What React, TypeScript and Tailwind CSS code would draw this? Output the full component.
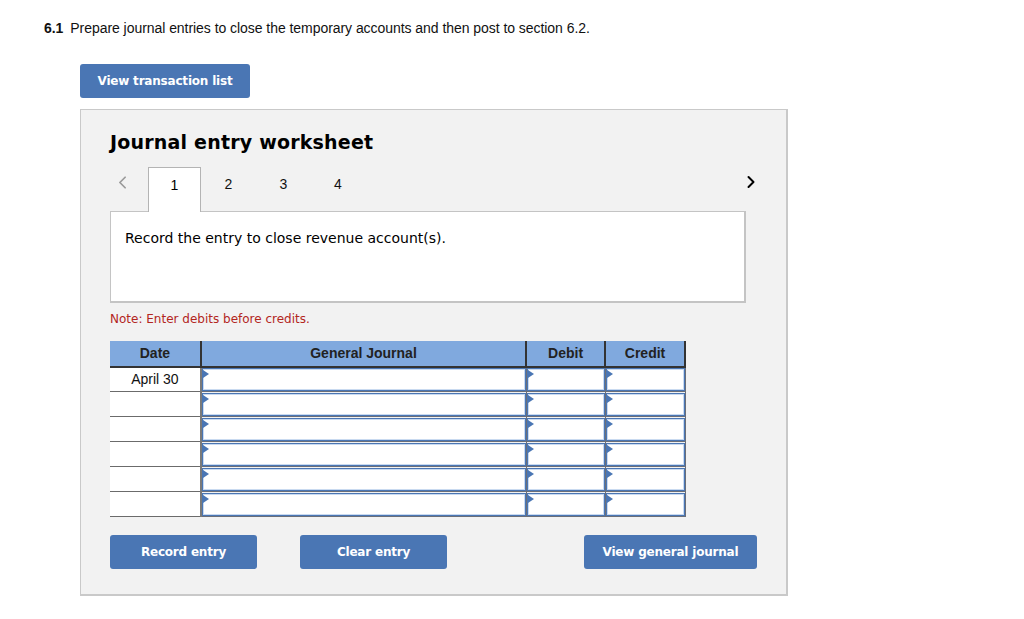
import { ChevronLeft, ChevronRight } from 'lucide-react';

const rows = ['April 30', '', '', '', '', ''];

const verdana = { fontFamily: 'Verdana, "DejaVu Sans", sans-serif' };

const BlueButton = ({ label, className }: { label: string; className: string }) => (
  <button
    className={`h-[34px] rounded-[3px] bg-[#4a76b4] text-[12px] font-bold text-white font-['DejaVu_Sans',sans-serif] tracking-[-0.2px] ${className}`}
  >
    {label}
  </button>
);

const InputCell = ({ width }: { width: string }) => (
  <td className={`${width} h-[25px] border border-[#6b6f78] p-0`}>
    <div className="relative h-[23px] border border-[#4a76b4] bg-white shadow-[inset_0_0_0_1px_#c9daf0]">
      <span className="absolute left-0 top-[1px] h-0 w-0 border-y-[4px] border-l-[6px] border-y-transparent border-l-[#4a76b4]" />
    </div>
  </td>
);

export default function App() {
  return (
    <div className="min-h-[619px] w-[1024px] bg-white font-['Liberation_Sans',Arial,sans-serif] text-[#111]">
      <div className="pl-[44px] pt-[18px] text-[14px] leading-[20px] tracking-[-0.05px]">
        <span className="font-bold">6.1</span>
        <span className="ml-[7px]">Prepare journal entries to close the temporary accounts and then post to section 6.2.</span>
      </div>

      <div className="pl-[80px] pt-[26px]">
        <BlueButton label="View transaction list" className="w-[170px]" />
      </div>

      <div className="ml-[80px] mt-[11px] w-[708px] border border-[#c9c9c9] border-r-2 border-b-2 bg-[#f2f2f2] pl-[29px] pt-[18px] pb-[25px]">
        <h2 className="text-[19px] font-bold text-black tracking-[0.2px]" style={verdana}>
          Journal entry worksheet
        </h2>

        <div className="mt-[10px] flex h-[44px] items-start">
          <div className="flex h-[44px] w-[38px] items-start pl-[2px] pt-[5px] text-[#9a9a9a]">
            <ChevronLeft size={21} strokeWidth={2} />
          </div>
          <div className="relative z-10 -mb-px flex h-[45px] w-[53px] justify-center border border-b-0 border-[#b4b4b4] bg-white pt-[7px] text-[14px] text-black">
            1
          </div>
          <div className="flex h-[44px] w-[55px] justify-center pt-[7px] text-[14px]">2</div>
          <div className="flex h-[44px] w-[55px] justify-center pt-[7px] text-[14px]">3</div>
          <div className="flex h-[44px] w-[54px] justify-center pt-[7px] text-[14px]">4</div>
          <div className="flex h-[44px] flex-1 items-start justify-end pr-[25px] pt-[5px] text-black">
            <ChevronRight size={20} strokeWidth={2.4} />
          </div>
        </div>

        <div className="relative h-[92px] w-[636px] border border-[#c4c4c4] border-r-2 border-b-2 bg-white pl-[14px] pt-[16px] text-[14px] text-black" style={verdana}>
          Record the entry to close revenue account(s).
        </div>

        <p className="mt-[7px] text-[12px] text-[#b3261e]" style={verdana}>
          Note: Enter debits before credits.
        </p>

        <table className="mt-[13px] w-[576px] border-collapse text-[14px]">
          <thead>
            <tr className="h-[26px] bg-[#80a9de] font-bold text-[#222]">
              <th className="w-[91px] border-r-2 border-b-2 border-[#333]">Date</th>
              <th className="w-[326px] border-r-2 border-b-2 border-[#333]">General Journal</th>
              <th className="w-[79px] border-r-2 border-b-2 border-[#333]">Debit</th>
              <th className="w-[80px] border-r-2 border-b-2 border-[#333]">Credit</th>
            </tr>
          </thead>
          <tbody>
            {rows.map((d, i) => (
              <tr key={i}>
                <td className="h-[25px] border-b border-[#6b6b6b] border-r-2 border-r-[#7a7a7a] bg-white p-0 text-center">{d}</td>
                <InputCell width="w-[326px]" />
                <InputCell width="w-[79px]" />
                <InputCell width="w-[80px]" />
              </tr>
            ))}
          </tbody>
        </table>

        <div className="mt-[18px] flex">
          <BlueButton label="Record entry" className="w-[147px]" />
          <BlueButton label="Clear entry" className="ml-[43px] w-[147px]" />
          <BlueButton label="View general journal" className="ml-[137px] w-[173px]" />
        </div>
      </div>
    </div>
  );
}
